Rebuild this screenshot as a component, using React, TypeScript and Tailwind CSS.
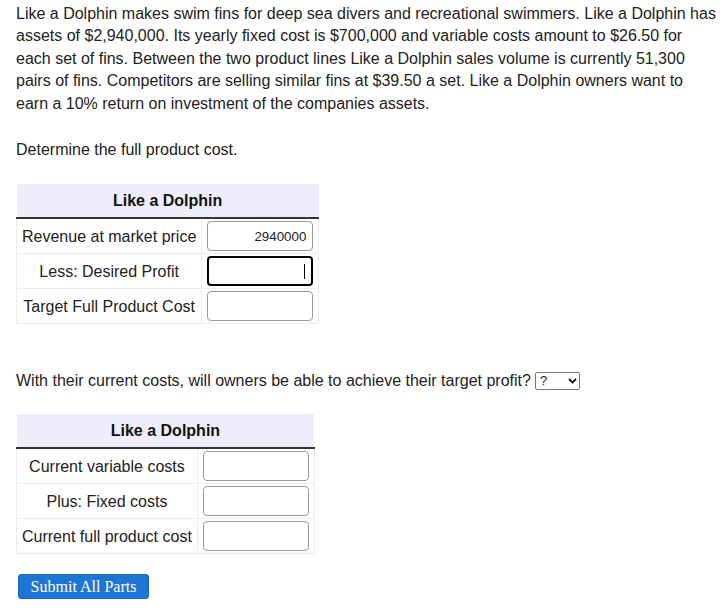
import React from "react"

type Row = { label: string; value?: string; focused?: boolean }

function AnswerTable({ rows }: { rows: Row[] }) {
  return (
    <table className="border-collapse">
      <thead>
        <tr>
          <th
            colSpan={2}
            className="bg-[#eeeefb] border-b-2 border-b-[#333333] py-[7px] text-[16px] font-bold leading-[19px] text-[#111111] text-center"
          >
            Like a Dolphin
          </th>
        </tr>
      </thead>
      <tbody>
        {rows.map((row) => (
          <tr key={row.label}>
            <td className="border border-[#ececec] px-[5px] pt-[3px] pb-[1px] text-center whitespace-nowrap text-[16px] text-[#222222]">
              {row.label}
            </td>
            <td className="border border-[#ececec] px-[5px] py-[2px]">
              <div className="relative">
                <input
                  readOnly
                  value={row.value ?? ""}
                  className={
                    row.focused
                      ? "block w-[106px] h-[30px] rounded-[4px] border-2 border-black px-[6px] text-right text-[13.33px] text-[#222222] outline-none"
                      : "block w-[106px] h-[30px] rounded-[4px] border border-[#9a9a9a] px-[6px] text-right text-[13.33px] text-[#222222] outline-none"
                  }
                />
                {row.focused && <span className="absolute right-[8px] top-[8px] w-[1px] h-[15px] bg-black" />}
              </div>
            </td>
          </tr>
        ))}
      </tbody>
    </table>
  )
}

export default function App() {
  const firstRows: Row[] = [
    { label: "Revenue at market price", value: "2940000" },
    { label: "Less: Desired Profit", focused: true },
    { label: "Target Full Product Cost" },
  ]

  const secondRows: Row[] = [
    { label: "Current variable costs" },
    { label: "Plus: Fixed costs" },
    { label: "Current full product cost" },
  ]

  return (
    <div className="w-[728px] min-h-[615px] bg-white pl-4 pt-[3px] font-['Liberation_Sans',Arial,sans-serif] text-[16px] text-[#222222]">
      <p className="w-[702px] leading-[22.4px]">
        Like a Dolphin makes swim fins for deep sea divers and recreational swimmers. Like a Dolphin has assets of
        $2,940,000. Its yearly fixed cost is $700,000 and variable costs amount to $26.50 for each set of fins. Between
        the two product lines Like a Dolphin sales volume is currently 51,300 pairs of fins. Competitors are selling
        similar fins at $39.50 a set. Like a Dolphin owners want to earn a 10% return on investment of the companies
        assets.
      </p>
      <p className="mt-[24px] leading-[22.4px]">Determine the full product cost.</p>

      <div className="mt-[23px]">
        <AnswerTable rows={firstRows} />
      </div>

      <div className="mt-[46px] flex items-center h-[22px] leading-[22.4px]">
        <span>With their current costs, will owners be able to achieve their target profit?</span>
        <div className="relative ml-[4px]">
          <select
            defaultValue="?"
            className="appearance-none block w-[45px] h-[18px] rounded-[2px] border border-[#767676] bg-white pl-[4px] text-[13px] leading-[16px] text-[#222222]"
          >
            <option>?</option>
            <option>Yes</option>
            <option>No</option>
          </select>
          <svg
            className="pointer-events-none absolute right-[3px] top-[6px]"
            width="9"
            height="6"
            viewBox="0 0 9 6"
            fill="none"
          >
            <path d="M1 1l3.5 3.5L8 1" stroke="#111111" strokeWidth="1.8" />
          </svg>
        </div>
      </div>

      <div className="mt-[22px]">
        <AnswerTable rows={secondRows} />
      </div>

      <button
        type="button"
        className="mt-[20px] ml-[2px] w-[131px] h-[25px] rounded-[3px] border border-[#1b66bd] bg-[#1f75d3] font-['Liberation_Serif','Times_New_Roman',serif] text-[16px] leading-[23px] text-white"
      >
        Submit All Parts
      </button>
    </div>
  )
}
